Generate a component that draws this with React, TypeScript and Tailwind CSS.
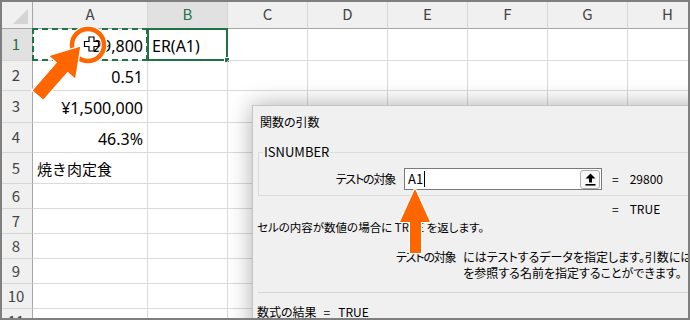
import React from 'react';

const COLS = ['A', 'B', 'C', 'D', 'E', 'F', 'G', 'H'];
const ROWS = [1, 2, 3, 4, 5, 6, 7, 8, 9, 10, 11];

// cell contents keyed by "row-col"
const CELLS: Record<string, { text: string; align: 'left' | 'right'; cjk?: boolean }> = {
  '1-A': { text: '29,800', align: 'right' },
  '1-B': { text: 'ER(A1)', align: 'left' },
  '2-A': { text: '0.51', align: 'right' },
  '3-A': { text: '¥1,500,000', align: 'right' },
  '4-A': { text: '46.3%', align: 'right' },
  '5-A': { text: '焼き肉定食', align: 'left', cjk: true },
};

const font = "font-['Noto_Sans_CJK_JP',sans-serif]";
const cellFont = "font-['Noto_Sans','Noto_Sans_CJK_JP',sans-serif]";

function Sheet() {
  return (
    <div
      className={`grid w-max grid-cols-[33px_115px_repeat(7,80px)] grid-rows-[29px_32px_30px_32px_30px_31px_repeat(6,25px)] ${font}`}
    >
      {/* corner */}
      <div className="relative border-b border-r border-[#a6a6a6] bg-[#f0f0f0]">
        <svg width="18" height="18" viewBox="0 0 18 18" className="absolute bottom-[3px] right-[3px]">
          <polygon points="17,2 17,17 2,17" fill="#d4d4d4" />
        </svg>
      </div>
      {COLS.map((c) => (
        <div
          key={c}
          className={`flex items-center justify-center border-b border-r border-b-[#a6a6a6] border-r-[#d6d6d6] text-[15px] ${
            c === 'B' ? 'bg-[#e1e1e1] text-[#217346]' : 'bg-[#f0f0f0] text-[#444]'
          }`}
        >
          {c}
        </div>
      ))}
      {ROWS.map((r) => (
        <React.Fragment key={r}>
          <div
            className={`flex items-center justify-center border-b border-r border-b-[#d6d6d6] border-r-[#a6a6a6] text-[15px] ${
              r === 1 ? 'bg-[#e1e1e1] text-[#217346]' : 'bg-[#f0f0f0] text-[#444]'
            }`}
          >
            {r}
          </div>
          {COLS.map((c) => {
            const cell = CELLS[`${r}-${c}`];
            const isCopy = r === 1 && c === 'A';
            const isActive = r === 1 && c === 'B';
            return (
              <div
                key={c}
                className={`relative flex items-center border-b border-r border-[#dadada] px-1 text-black ${
                  cell?.align === 'right' ? 'justify-end' : 'justify-start'
                }`}
              >
                {cell && (
                  <span
                    className={`whitespace-nowrap pt-[2px] ${cell.cjk ? 'text-[15px]' : `text-[16px] ${cellFont}`}`}
                  >
                    {cell.text}
                  </span>
                )}
                {isCopy && (
                  <div className="pointer-events-none absolute inset-[-1px] border-2 border-dashed border-[#217346]" />
                )}
                {isActive && (
                  <div className="pointer-events-none absolute inset-[-1px] border-2 border-[#217346]">
                    <div className="absolute -bottom-[4px] -right-[4px] h-[6px] w-[6px] border border-white bg-[#217346]" />
                  </div>
                )}
              </div>
            );
          })}
        </React.Fragment>
      ))}
    </div>
  );
}

const UploadIcon = () => (
  <svg width="11" height="13" viewBox="0 0 11 13" aria-hidden>
    <polygon points="5.5,0.5 10.5,5.5 7,5.5 7,9.5 4,9.5 4,5.5 0.5,5.5" fill="#000" />
    <rect x="0.5" y="11" width="10" height="1.6" fill="#000" />
  </svg>
);

function ArgsDialog() {
  return (
    <div
      className={`absolute left-[252px] top-[105px] h-[240px] w-[470px] border border-[#c4c4c4] bg-[#f0f0f0] text-[12px] leading-[16px] text-black shadow-[0_0_22px_rgba(0,0,0,0.32)] [font-feature-settings:'palt'] ${font}`}
    >
      <div className="pl-[7px] pt-[8px]">関数の引数</div>

      <fieldset className="ml-[5px] mt-[14px] border border-[#dcdcdc] pb-[5px] pl-[4px]">
        <legend className="px-[1px] text-[13px] leading-[16px]">ISNUMBER</legend>
        <div className="mt-2 flex items-center">
          <span className="w-[132px] text-right tracking-[-1.2px]">テストの対象</span>
          <div className="ml-[9px] flex h-[22px] w-[198px] items-center border border-[#7a7a7a] bg-white pl-[3px] pr-[1px]">
            <span className="text-[13px]">A1</span>
            <span className="ml-[1px] h-[16px] w-px bg-black" />
            <div className="ml-auto flex h-[19px] w-[20px] items-center justify-center rounded-[3px] border border-[#adadad] bg-[#f7f7f7]">
              <UploadIcon />
            </div>
          </div>
          <span className="ml-[10px]">=</span>
          <span className="ml-[11px]">29800</span>
        </div>
      </fieldset>

      <div className="ml-[359px] mt-[5px] flex">
        <span>=</span>
        <span className="ml-[11px]">TRUE</span>
      </div>

      <div className="ml-[4px] mt-[2px] whitespace-pre text-[11.5px]">セルの内容が数値の場合に TRUE を返します。</div>

      <div className="mt-[14px] flex">
        <span className="ml-[143px] w-[68px] whitespace-nowrap tracking-[-1.2px]">テストの対象</span>
        <div className="whitespace-nowrap">
          <div>にはテストするデータを指定します。引数には、セル</div>
          <div>を参照する名前を指定することができます。</div>
        </div>
      </div>

      <div className="ml-[5px] mt-[11px] border-t border-[#d5d5d5]" />

      <div className="ml-[4px] mt-[11px] flex whitespace-nowrap">
        <span>数式の結果</span>
        <span className="ml-[7px]">=</span>
        <span className="ml-[8px]">TRUE</span>
      </div>
    </div>
  );
}

// orange call-out marks drawn over the sheet and dialog
function Annotations() {
  return (
    <svg className="pointer-events-none absolute inset-0" width="690" height="320" viewBox="0 0 690 320">
      <circle cx="88" cy="45" r="16" fill="none" stroke="#fff" strokeWidth="7" />
      <circle cx="88" cy="45" r="16" fill="none" stroke="#ff6600" strokeWidth="4.5" />
      <polygon
        points="83,37.5 88,37.5 88,42 92.5,42 92.5,47 88,47 88,51.5 83,51.5 83,47 78.5,47 78.5,42 83,42"
        transform="translate(6 -0.5)"
        fill="#fff"
        stroke="#000"
        strokeWidth="1.2"
      />
      <g transform="translate(38 95) rotate(-48.8)">
        <polygon
          points="0,-7 37,-7 37,-17 64,0 37,17 37,7 0,7"
          fill="#ff6600"
          stroke="#fff"
          strokeWidth="2.5"
          paintOrder="stroke"
        />
      </g>
      <polygon
        points="415,189 430,222 421,222 421,253 410,253 410,222 400,222"
        fill="#ff6600"
        stroke="#fff"
        strokeWidth="2.5"
        paintOrder="stroke"
      />
    </svg>
  );
}

export default function App() {
  return (
    <div className="relative h-[320px] w-[690px] overflow-hidden bg-white">
      <Sheet />
      <ArgsDialog />
      <Annotations />
      <div className="pointer-events-none absolute inset-0 border-2 border-[#7f7f7f]" />
    </div>
  );
}
